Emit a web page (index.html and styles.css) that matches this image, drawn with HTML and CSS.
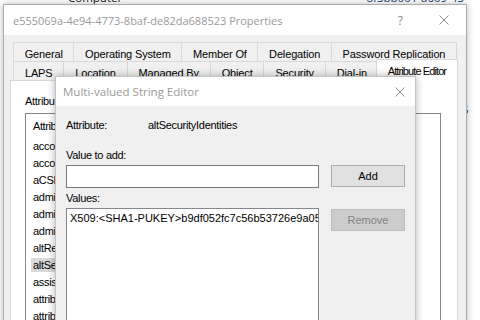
FILE: index.html
```html
<!DOCTYPE html>
<html>
<head>
<meta charset="utf-8">
<link rel="stylesheet" href="styles.css">
</head>
<body>
<div class="bgrow">
  <span class="bg-computer">Computer</span>
  <span class="bg-guid">8f3bb001-a609-43</span>
</div>
<div class="bgcol">5</div>

<div class="props">
  <div class="titlebar">
    <span class="title">e555069a-4e94-4773-8baf-de82da688523 Properties</span>
    <span class="help">?</span>
    <svg class="close" width="10" height="10" viewBox="0 0 10 10"><path d="M0.5 0.5L9.5 9.5M9.5 0.5L0.5 9.5" stroke="#8a8a8a" stroke-width="1" fill="none"/></svg>
  </div>
  <div class="pbody">
    <div class="tabrow">
      <div class="tab">General</div>
      <div class="tab">Operating System</div>
      <div class="tab">Member Of</div>
      <div class="tab">Delegation</div>
      <div class="tab">Password Replication</div>
    </div>
    <div class="tabrow">
      <div class="tab">LAPS</div>
      <div class="tab">Location</div>
      <div class="tab">Managed By</div>
      <div class="tab">Object</div>
      <div class="tab">Security</div>
      <div class="tab">Dial-in</div>
      <div class="tab sel">Attribute Editor</div>
    </div>
    <div class="panel">
      <div class="plabel">Attributes:</div>
      <div class="alist">
        <div class="ahead"><span class="hcol">Attribute</span><span class="hcol">Value</span></div>
        <div class="arow">accountExpires</div>
        <div class="arow">accountNameHistory</div>
        <div class="arow">aCSPolicyName</div>
        <div class="arow">adminCount</div>
        <div class="arow">adminDescription</div>
        <div class="arow">adminDisplayName</div>
        <div class="arow">altRecipient</div>
        <div class="arow"><span class="hl">altSecurityIdentities</span></div>
        <div class="arow">assistant</div>
        <div class="arow">attributeCertificateAttribute</div>
        <div class="arow">attributeDisplayNames</div>
      </div>
    </div>
  </div>
</div>

<div class="dlg">
  <div class="dtitlebar">
    <span class="dtitle">Multi-valued String Editor</span>
    <svg class="dclose" width="10" height="10" viewBox="0 0 10 10"><path d="M0.5 0.5L9.5 9.5M9.5 0.5L0.5 9.5" stroke="#8a8a8a" stroke-width="1" fill="none"/></svg>
  </div>
  <div class="dbody">
    <div class="attrrow">
      <span class="attrlbl">Attribute:</span>
      <span class="attrval">altSecurityIdentities</span>
    </div>
    <div class="flabel first">Value to add:</div>
    <div class="frow">
      <div class="textbox"></div>
      <div class="btn">Add</div>
    </div>
    <div class="flabel">Values:</div>
    <div class="frow">
      <div class="vlist"><div class="vitem">X509:&lt;SHA1-PUKEY&gt;b9df052fc7c56b53726e9a05b1e2c4d8f0a7e6c3</div></div>
      <div class="btn disabled">Remove</div>
    </div>
  </div>
</div>
</body>
</html>
```

FILE: styles.css
```css
body {
  margin: 0;
  width: 480px;
  height: 320px;
  overflow: hidden;
  position: relative;
  background: #ffffff;
  font-family: "Liberation Sans", Arial, sans-serif;
  font-size: 11px;
  color: #000;
}

.bgrow {
  display: flex;
  margin-top: -10px;
  font-family: "Open Sans", sans-serif;
  font-size: 11.5px;
  line-height: 16px;
}
.bg-computer { margin-left: 68px; color: #111; }
.bg-guid { margin-left: auto; margin-right: 16px; color: #1c3a70; }
.bgcol {
  margin: 96px 0 0 462px;
  font-family: "Open Sans", sans-serif;
  font-size: 11.5px;
  line-height: 16px;
  color: #1c3a70;
}

/* Properties window */
.props {
  position: absolute;
  left: 3px;
  top: 4px;
  width: 464px;
  height: 340px;
  box-sizing: border-box;
  border: 1px solid #ababab;
  background: #f0f0f0;
  box-shadow: 0 0 7px rgba(0, 0, 0, 0.28);
  display: flex;
  flex-direction: column;
}
.titlebar {
  height: 30px;
  background: #fff;
  display: flex;
  align-items: center;
  flex: none;
}
.title {
  padding-left: 9px;
  font-family: "Open Sans", sans-serif;
  font-size: 11px;
  color: #9a9a9a;
  flex: 1;
}
.help {
  font-family: "Open Sans", sans-serif;
  font-size: 12px;
  color: #8a8a8a;
  margin-right: 36px;
}
.close { margin-right: 17px; }

.pbody {
  padding: 7px 8px 0 6px;
  flex: 1;
  display: flex;
  flex-direction: column;
}
.tabrow {
  display: flex;
  margin-left: 3px;
  width: 443px;
}
.tab {
  flex: 1 1 auto;
  height: 19px;
  box-sizing: border-box;
  border: 1px solid #d9d9d9;
  border-bottom: none;
  margin-right: -1px;
  padding: 5px 6px 0;
  line-height: 13px;
  text-align: center;
  white-space: nowrap;
  background: #f0f0f0;
  letter-spacing: -0.15px;
}
.tab.sel {
  background: #fff;
  height: 22px;
  margin: -2px -2px 0 -2px;
  position: relative;
  z-index: 1;
  letter-spacing: -0.9px;
}

.panel {
  flex: 1;
  background: #fff;
  border: 1px solid #d9d9d9;
  width: 448px;
  box-sizing: border-box;
  margin-top: -1px;
  padding: 14px 0 0 14px;
}
.plabel { line-height: 13px; letter-spacing: -0.3px; }
.alist {
  margin-top: 5px;
  width: 416px;
  height: 240px;
  border: 1px solid #828790;
  box-sizing: border-box;
}
.ahead {
  height: 24px;
  display: flex;
  align-items: center;
  padding-left: 7px;
  letter-spacing: -0.4px;
}
.hcol { width: 140px; }
.arow {
  height: 17px;
  line-height: 17px;
  padding-left: 7px;
  letter-spacing: -0.3px;
}
.hl {
  background: #d9d9d9;
  margin-left: -2px;
  padding: 0 2px;
  display: inline-block;
  line-height: 14px;
}

/* Dialog */
.dlg {
  position: absolute;
  left: 55px;
  top: 76px;
  width: 361px;
  height: 270px;
  box-sizing: border-box;
  border: 1px solid #c4c4c4;
  background: #f0f0f0;
  box-shadow: 0 0 8px rgba(0, 0, 0, 0.3);
  display: flex;
  flex-direction: column;
  z-index: 2;
}
.dtitlebar {
  height: 29px;
  background: #fff;
  display: flex;
  align-items: center;
  flex: none;
}
.dtitle {
  flex: 1;
  padding-left: 7px;
  font-family: "Open Sans", sans-serif;
  font-size: 11.5px;
  color: #9a9a9a;
}
.dclose { margin-right: 10px; }

.dbody {
  padding: 12px 0 0 10px;
}
.attrrow {
  display: flex;
  line-height: 14px;
  letter-spacing: -0.3px;
}
.attrlbl { width: 82px; }
.flabel {
  line-height: 14px;
  margin-top: 3px;
  letter-spacing: -0.3px;
}
.flabel.first { margin-top: 16px; }
.frow {
  display: flex;
  gap: 12px;
  margin-top: 3px;
  align-items: flex-start;
}
.textbox {
  width: 253px;
  height: 23px;
  box-sizing: border-box;
  border: 1px solid #7a7a7a;
  background: #fff;
}
.btn {
  width: 74px;
  height: 22px;
  box-sizing: border-box;
  border: 1px solid #adadad;
  background: #e1e1e1;
  display: flex;
  align-items: center;
  justify-content: center;
}
.btn.disabled {
  margin-top: 1px;
  background: #cccccc;
  border-color: #bfbfbf;
  color: #838383;
}
.vlist {
  width: 253px;
  height: 120px;
  box-sizing: border-box;
  border: 1px solid #828790;
  background: #fff;
  overflow: hidden;
}
.vitem {
  padding: 3px 0 0 3px;
  line-height: 13px;
  white-space: nowrap;
}
```
